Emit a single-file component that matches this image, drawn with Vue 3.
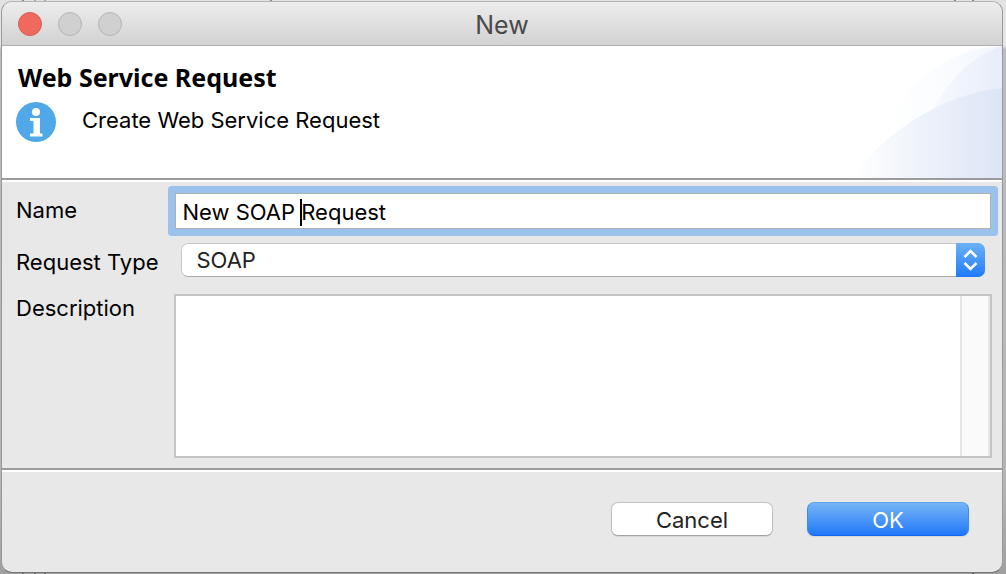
<script setup>
import { ref } from 'vue'

const name = ref('New SOAP Request')
const requestType = ref('SOAP')
const description = ref('')
const requestTypes = ['SOAP', 'RESTful']
</script>

<template>
  <div class="desktop">
    <form class="window" @submit.prevent>
      <header class="titlebar">
        <div class="lights">
          <button type="button" class="light close" aria-label="Close"></button>
          <button type="button" class="light" aria-label="Minimize" disabled></button>
          <button type="button" class="light" aria-label="Zoom" disabled></button>
        </div>
        <span class="window-title">New</span>
      </header>

      <section class="banner">
        <div class="banner-text">
          <h1>Web Service Request</h1>
          <div class="message">
            <svg class="info" viewBox="0 0 40 40" aria-hidden="true">
              <circle cx="20" cy="20" r="20" fill="#50a8e8" />
              <circle cx="20" cy="10" r="4" fill="#fff" />
              <path d="M14 16h10v15.500h2.500v3H14v-3h3.500v-12.500H14z" fill="#fff" />
            </svg>
            <p>Create Web Service Request</p>
          </div>
        </div>
        <svg class="swoosh" viewBox="0 0 150 132" aria-hidden="true">
          <defs>
            <linearGradient id="outer" x1="0" x2="1">
              <stop offset="0.2" stop-color="#fff" />
              <stop offset="0.6" stop-color="#fafcff" />
              <stop offset="1" stop-color="#f2f6fe" />
            </linearGradient>
            <linearGradient id="middle" x1="0" x2="1">
              <stop offset="0" stop-color="#f7f9fe" />
              <stop offset="1" stop-color="#e7edf9" />
            </linearGradient>
            <linearGradient id="inner" x1="0" x2="1">
              <stop offset="0" stop-color="#fff" />
              <stop offset="0.55" stop-color="#ebf0fa" />
              <stop offset="1" stop-color="#dde5f5" />
            </linearGradient>
          </defs>
          <path d="M5 132C20 80 70 2 150 0V132z" fill="url(#outer)" />
          <path d="M80 66C96 34 120 10 150 0V66z" fill="url(#middle)" />
          <path d="M0 132C34 84 92 48 150 42V132z" fill="url(#inner)" />
        </svg>
      </section>

      <section class="fields">
        <label for="name" class="name-label">Name</label>
        <div class="name-box">
          <input id="name" v-model="name" type="text" spellcheck="false" />
          <span class="caret"></span>
        </div>

        <label for="type" class="type-label">Request Type</label>
        <div class="select-box">
          <select id="type" v-model="requestType">
            <option v-for="type in requestTypes" :key="type">{{ type }}</option>
          </select>
          <svg class="stepper" viewBox="0 0 29 34" aria-hidden="true">
            <path d="M8.500 14l6-6 6 6M8.500 20l6 6 6-6" fill="none" stroke="#fff" stroke-width="2.500" />
          </svg>
        </div>

        <label for="description" class="description-label">Description</label>
        <div class="description-box">
          <textarea id="description" v-model="description"></textarea>
          <div class="scroll-track"></div>
        </div>
      </section>

      <footer class="actions">
        <button type="button" class="button">Cancel</button>
        <button type="submit" class="button primary">OK</button>
      </footer>
    </form>
  </div>
</template>

<style>
body {
  background: #c4c4c4;
}
</style>

<style scoped>
* {
  box-sizing: border-box;
}

.desktop {
  display: flex;
  min-height: 100vh;
  padding: 1px 3px 1px 1px;
  background:
    linear-gradient(#888, #666) 22px 0 / 2px 100% no-repeat,
    linear-gradient(#aaa, #666) 34px 0 / 2px 100% no-repeat,
    linear-gradient(#aaa, #666) 44px 0 / 2px 100% no-repeat,
    linear-gradient(#888, #888) 270px 0 / 2px 2px no-repeat,
    linear-gradient(#888, #888) 954px 0 / 2px 2px no-repeat,
    linear-gradient(#888, #555) 972px 0 / 2px 100% no-repeat,
    linear-gradient(#e2e2e2 0, #e6e6e6 45px, #bcbcbc 50px, #b4b4b4 85%, #a0a0a0 100%);
  font-family: Inter, "Liberation Sans", sans-serif;
  font-size: 22px;
  line-height: 28px;
  color: #000;
}

.window {
  display: flex;
  flex: 1;
  flex-direction: column;
  overflow: hidden;
  border: 1px solid #9a9a9a;
  border-top-color: #b4b4b4;
  border-bottom-color: #777;
  border-radius: 11px;
  background: #e8e8e8;
}

.titlebar {
  display: grid;
  grid-template-columns: 1fr auto 1fr;
  align-items: center;
  height: 44px;
  padding: 0 16px;
  border-bottom: 1px solid #b0b0b0;
  background: linear-gradient(#ededed, #d2d2d2);
}

.lights {
  display: flex;
  gap: 16px;
}

.light {
  width: 24px;
  height: 24px;
  padding: 0;
  border: 1px solid #b4b4b4;
  border-radius: 50%;
  background: #d0d0d0;
}

.close {
  border-color: #db5a51;
  background: #ee6a5f;
}

.window-title {
  padding-top: 2px;
  font-size: 25px;
  color: #4a4a4a;
}

.banner {
  display: flex;
  justify-content: space-between;
  height: 136px;
  border-bottom: 2px solid #fff;
  background: #fff;
  box-shadow: inset 0 -2px #9c9c9c;
}

.banner-text {
  padding: 17px 0 0 14px;
}

h1 {
  margin: 0 0 11px 2px;
  font-family: "Noto Sans", "Open Sans", sans-serif;
  font-size: 25px;
  font-weight: 700;
  line-height: 28px;
}

.message {
  display: flex;
  gap: 26px;
}

.info {
  width: 40px;
  height: 40px;
}

p {
  margin: 4px 0 0;
}

.swoosh {
  width: 150px;
  height: 132px;
}

.fields {
  display: grid;
  flex: 1;
  grid-template-columns: auto 1fr;
  grid-template-rows: auto auto 1fr;
  column-gap: 16px;
  padding: 11px 10px 10px 14px;
  border-bottom: 2px solid #9c9c9c;
}

.name-label {
  padding-top: 3px;
}

.name-box {
  position: relative;
  display: flex;
  margin: 0 1px 14px;
  border-radius: 1px;
  box-shadow: 0 0 0 7px #9bc1ed;
}

#name {
  width: 100%;
  height: 36px;
  padding: 2px 6px 0;
  border: 1px solid #b0b0b0;
  outline: none;
  background: #fff;
  color: #000;
  font: inherit;
}

.caret {
  position: absolute;
  top: 6px;
  left: 125px;
  width: 2px;
  height: 27px;
  background: #000;
}

.type-label {
  padding-top: 5px;
}

.select-box {
  position: relative;
  display: flex;
  height: 34px;
  margin: 0 7px 17px;
  overflow: hidden;
  border-radius: 7px;
}

select {
  width: 100%;
  padding: 0 40px 0 14px;
  border: 1px solid #c6c6c6;
  border-bottom-color: #a8a8a8;
  border-radius: 7px;
  appearance: none;
  background: #fff;
  color: #222;
  font: inherit;
}

.stepper {
  position: absolute;
  top: 0;
  right: 0;
  width: 29px;
  height: 34px;
  background: linear-gradient(#6cb1f5, #1f7afb);
  pointer-events: none;
}

.description-box {
  display: flex;
  border: 2px solid #c4c4c4;
  background: #fff;
}

textarea {
  flex: 1;
  min-width: 0;
  padding: 4px 6px;
  border: 0;
  outline: none;
  resize: none;
  background: #fff;
  font: inherit;
}

.scroll-track {
  width: 30px;
  border: solid #e6e6e6;
  border-width: 0 2px;
  background: #fafafa;
}

.actions {
  display: flex;
  justify-content: flex-end;
  gap: 34px;
  padding: 32px 33px 36px;
  box-shadow: inset 0 2px #fff;
}

.button {
  width: 162px;
  height: 34px;
  padding: 1px 0 0;
  border: 1px solid #c2c2c2;
  border-bottom-color: #a4a4a4;
  border-radius: 7px;
  background: #fff;
  box-shadow: 0 1px 1px #d6d6d6;
  color: #222;
  font: inherit;
}

.primary {
  border-color: #61a3ef #3d8af5 #1464ef;
  background: linear-gradient(#77b4f5, #2179fa);
  color: #fff;
}
</style>
